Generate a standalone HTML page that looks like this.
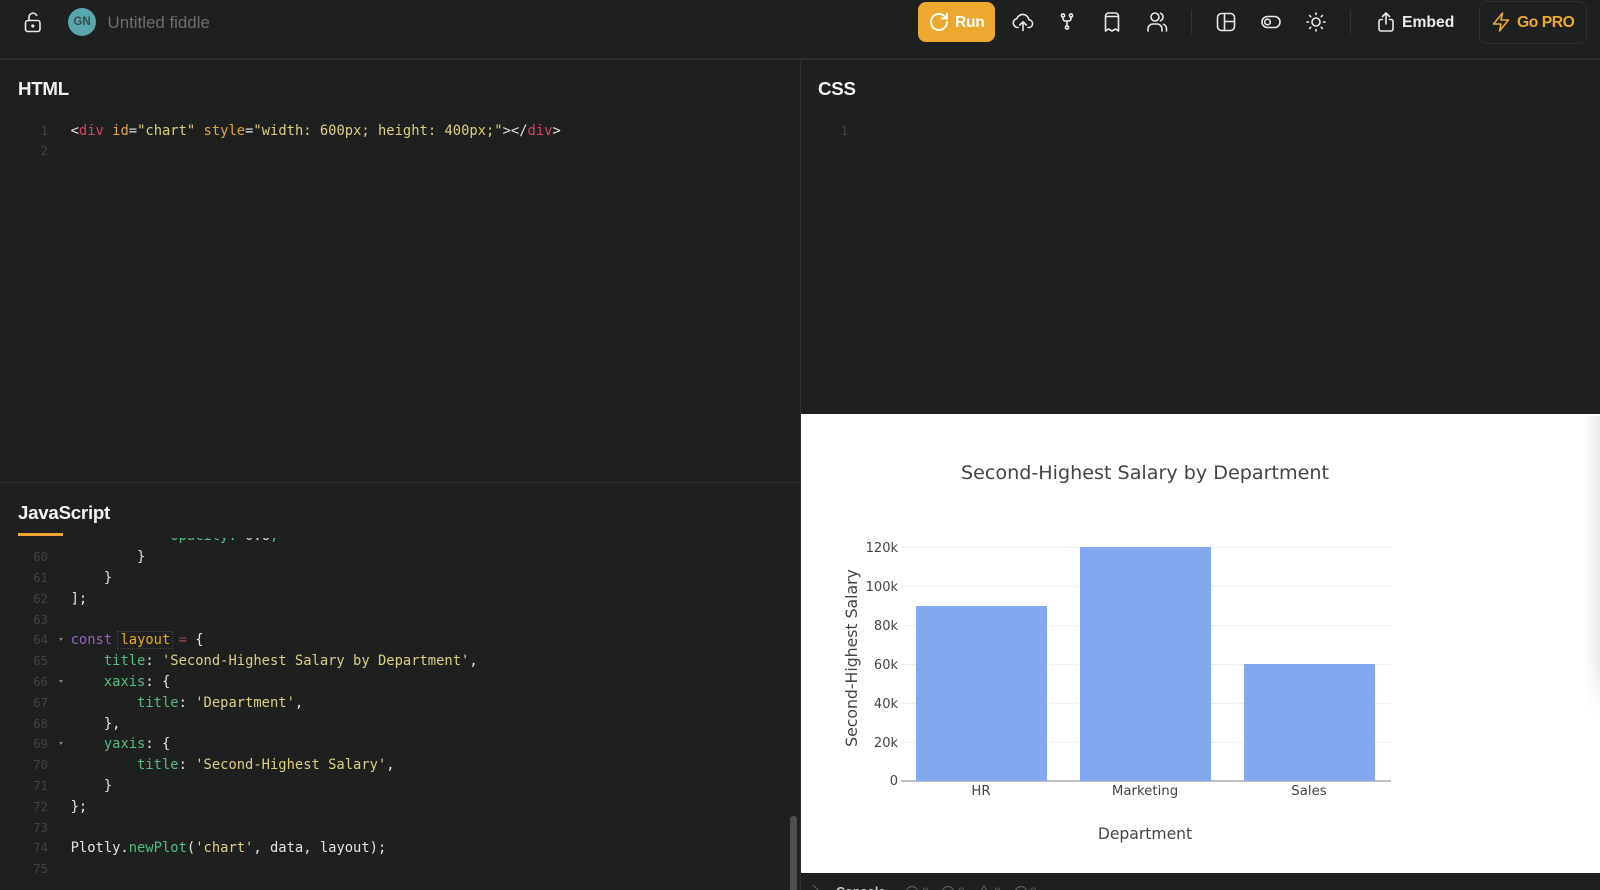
<!DOCTYPE html>
<html><head><meta charset="utf-8"><style>
html,body{margin:0;padding:0;background:#1e2020;width:1600px;height:890px;overflow:hidden}
#r{position:relative;width:1600px;height:890px;overflow:hidden;font-family:"Liberation Sans",sans-serif;color:#e8e8e8;filter:blur(.3px)}
.a{position:absolute}
.h{position:absolute;font:bold 18.7px/24px "Liberation Sans",sans-serif;color:#f2f2f2;letter-spacing:-.25px}
.code{position:absolute;left:0;overflow:hidden;font:13.8px/20.8px "DejaVu Sans Mono",monospace;white-space:pre;color:#e4e4e4}
.l{position:absolute;left:70.6px;height:20.8px}
.n{position:absolute;left:20px;width:28px;text-align:right;color:#414342;font-size:12.4px;height:20.8px}
.f{position:absolute;left:58.5px;width:0;height:0;border-left:2.5px solid transparent;border-right:2.5px solid transparent;border-top:3.5px solid #808080}
.t{color:#d8425f}.o{color:#e3a236}.s{color:#dccf7d}.g{color:#52bd7f}.p{color:#9a5fc0}.e{color:#a84b4b}
svg.i{position:absolute;fill:none;stroke:#e8e8e8;stroke-width:1.6;stroke-linecap:round;stroke-linejoin:round}
.d{position:absolute;top:10px;width:1px;height:24px;background:#333534}
.b{position:absolute;top:12px;font:bold 15.7px/21px 'Liberation Sans',sans-serif}
</style></head><body><div id="r">
<div class="a" style="left:0;top:58px;width:1600px;height:2px;background:#2d2f2e"></div>
<div class="a" style="left:800px;top:60px;width:1px;height:830px;background:#2d2f2e"></div>
<div class="a" style="left:0;top:482px;width:801px;height:1px;background:#2d2f2e"></div>

<svg class="i" style="left:22px;top:11px" width="22" height="22" viewBox="0 0 22 22"><rect x="3.5" y="9.5" width="14.5" height="11" rx="2.5"/><path d="M7 9.500V6a4 4 0 0 1 7.600-1.600"/><circle cx="10.800" cy="15" r=".8" fill="#e8e8e8"/></svg>
<div class="a" style="left:68px;top:8px;width:28px;height:28px;border-radius:50%;background:#58a7ad;color:#3a4a48;font:bold 11.5px/29px 'Liberation Sans',sans-serif;text-align:center">GN</div>
<div class="a" style="left:107.500px;top:12px;font-size:16.900px;line-height:21px;color:#6c6e6d">Untitled fiddle</div>

<div class="a" style="left:918px;top:2px;width:77px;height:40px;border-radius:8px;background:#eda92f"></div>
<svg class="i" style="left:928px;top:11px;stroke:#fff;stroke-width:1.900" width="22" height="22" viewBox="0 0 22 22"><path d="M19 11a8 8 0 1 1-2.600-5.900L19 7.500"/><path d="M19 2.500v5h-5"/></svg>
<div class="b" style="left:955px;color:#fff;letter-spacing:-.3px">Run</div>

<svg class="i" style="left:1012px;top:11px" width="22" height="22" viewBox="0 0 22 22"><path d="M6 16.500H5.500a4.500 4.500 0 0 1-.6-8.900 6.200 6.200 0 0 1 12 1.200 3.900 3.900 0 0 1 .6 7.700H16"/><path d="M11 19.500V11M7.800 14 11 10.800l3.200 3.200"/></svg>
<svg class="i" style="left:1056px;top:11px" width="22" height="22" viewBox="0 0 22 22"><circle cx="7" cy="4.500" r="1.600"/><circle cx="15" cy="4.500" r="1.600"/><circle cx="11" cy="16.500" r="1.600"/><path d="M7 6.100v1.400a2.500 2.500 0 0 0 2.500 2.500h3a2.500 2.500 0 0 0 2.500-2.500V6.100M11 10v4.900"/></svg>
<svg class="i" style="left:1101px;top:11px" width="22" height="22" viewBox="0 0 22 22"><path d="M4.500 5a3 3 0 0 1 3-3h7a3 3 0 0 1 3 3v15l-3-2-3.500 2-3.500-2-3 2zM4.500 5.500h13"/></svg>
<svg class="i" style="left:1146px;top:11px" width="22" height="22" viewBox="0 0 22 22"><circle cx="9" cy="6" r="4"/><path d="M2 20v-2a5 5 0 0 1 5-5h4a5 5 0 0 1 5 5v2M14.500 2.300a4 4 0 0 1 0 7.400M17.500 13.300a5 5 0 0 1 3 4.700v2"/></svg>
<div class="d" style="left:1191px"></div>
<svg class="i" style="left:1215px;top:11px" width="22" height="22" viewBox="0 0 22 22"><rect x="2.500" y="2.500" width="17" height="17" rx="4"/><path d="M9.500 2.500v17M9.500 10.500h10"/></svg>
<svg class="i" style="left:1260px;top:11px" width="22" height="22" viewBox="0 0 22 22"><rect x="2" y="5.500" width="18" height="11" rx="5.500"/><circle cx="7.500" cy="11" r="2.800"/></svg>
<svg class="i" style="left:1305px;top:11px" width="22" height="22" viewBox="0 0 22 22"><circle cx="11" cy="11" r="4"/><path d="M11 2v1.500M11 18.500V20M4.600 4.600l1.100 1.100M16.300 16.300l1.100 1.100M2 11h1.500M18.500 11H20M4.600 17.400l1.100-1.100M16.300 5.700l1.100-1.100"/></svg>
<div class="d" style="left:1350px"></div>
<svg class="i" style="left:1375px;top:11px" width="22" height="22" viewBox="0 0 22 22"><path d="M7.500 8.500H6a2 2 0 0 0-2 2V18a2 2 0 0 0 2 2h10a2 2 0 0 0 2-2v-7.500a2 2 0 0 0-2-2h-1.500M11 13V2M7.500 5.500 11 2l3.500 3.500"/></svg>
<div class="b" style="left:1402px;color:#ececec">Embed</div>
<div class="a" style="left:1479px;top:1px;width:106px;height:41px;border:1px solid #2f3130;border-radius:8px"></div>
<svg class="i" style="left:1490px;top:11px;stroke:#eda92f" width="22" height="22" viewBox="0 0 22 22"><path d="M12.500 2 3.500 13H11l-1.500 7 9-11H11z"/></svg>
<div class="b" style="left:1517px;color:#eda92f;letter-spacing:-.45px">Go PRO</div>

<div class="h" style="left:18px;top:76.500px">HTML</div>
<div class="h" style="left:818px;top:76.500px">CSS</div>
<div class="h" style="left:18px;top:500.500px">JavaScript</div>
<div class="a" style="left:18px;top:533px;width:45px;height:3px;background:#eda92f"></div>

<div class="code" style="top:0;width:800px;height:480px">
<div class="n" style="top:120.600px">1</div><div class="l" style="top:120.600px">&lt;<span class="t">div</span> <span class="o">id</span>=<span class="s">"chart"</span> <span class="o">style</span>=<span class="s">"width: 600px; height: 400px;"</span>&gt;&lt;/<span class="t">div</span>&gt;</div>
<div class="n" style="top:141px">2</div>
</div>
<div class="code" style="top:0;left:800px;width:100px;height:200px"><div class="n" style="top:120.500px">1</div></div>

<div class="code" style="top:538px;width:785px;height:352px">
<div class="l" style="top:-11.600px;color:#52bd7f">            <span class="g">opacity</span>: <span style="color:#dedede">0.6</span>,</div>
<div class="n" style="top:9.200px">60</div><div class="l" style="top:9.200px">        }</div>
<div class="n" style="top:30px">61</div><div class="l" style="top:30px">    }</div>
<div class="n" style="top:50.800px">62</div><div class="l" style="top:50.800px">];</div>
<div class="n" style="top:71.600px">63</div>
<div class="n" style="top:92.400px">64</div><div class="f" style="top:100px"></div><div class="l" style="top:92.400px"><span class="p">const</span> <span style="color:#eaa90f;outline:1px dotted #45453c;padding:0 2px;margin:0 -2px">layout</span> <span class="e">=</span> {</div>
<div class="n" style="top:113.200px">65</div><div class="l" style="top:113.200px">    <span class="g">title</span>: <span class="s">'Second-Highest Salary by Department'</span>,</div>
<div class="n" style="top:134px">66</div><div class="f" style="top:142px"></div><div class="l" style="top:134px">    <span class="g">xaxis</span>: {</div>
<div class="n" style="top:154.800px">67</div><div class="l" style="top:154.800px">        <span class="g">title</span>: <span class="s">'Department'</span>,</div>
<div class="n" style="top:175.600px">68</div><div class="l" style="top:175.600px">    },</div>
<div class="n" style="top:196.400px">69</div><div class="f" style="top:204px"></div><div class="l" style="top:196.400px">    <span class="g">yaxis</span>: {</div>
<div class="n" style="top:217.200px">70</div><div class="l" style="top:217.200px">        <span class="g">title</span>: <span class="s">'Second-Highest Salary'</span>,</div>
<div class="n" style="top:238px">71</div><div class="l" style="top:238px">    }</div>
<div class="n" style="top:258.800px">72</div><div class="l" style="top:258.800px">};</div>
<div class="n" style="top:279.600px">73</div>
<div class="n" style="top:300.400px">74</div><div class="l" style="top:300.400px">Plotly.<span class="g">newPlot</span>(<span class="s">'chart'</span>, data, layout);</div>
<div class="n" style="top:321.200px">75</div>
</div>
<div class="a" style="left:790px;top:816px;width:7px;height:74px;border-radius:3px 3px 0 0;background:#4c4e4a"></div>

<div class="a" style="left:801px;top:414px;width:799px;height:459px;background:#fff"></div>
<div class="a" style="left:1584px;top:416px;width:16px;height:300px;background:linear-gradient(90deg,#fff,#f1f1f2 70%,#e8e8ea);-webkit-mask-image:linear-gradient(180deg,#000 80%,transparent)"></div>
<svg class="a" style="left:801px;top:414px" width="799" height="459" viewBox="801 414 799 459" font-family="'DejaVu Sans',sans-serif" fill="#444">
<g stroke="#eeeeee" stroke-width="1"><path d="M901 547.500H1391M901 586.500H1391M901 625.500H1391M901 664.500H1391M901 703.500H1391M901 742.500H1391"/></g>
<path d="M901 781H1391" stroke="#9a9a9a" stroke-width="1.200"/>
<g fill="#83a8ef"><rect x="916" y="606" width="131" height="175"/><rect x="1080" y="547" width="131" height="234"/><rect x="1244" y="664" width="131" height="117"/></g>
<text x="1145" y="479" text-anchor="middle" font-size="19" textLength="368" lengthAdjust="spacingAndGlyphs">Second-Highest Salary by Department</text>
<g font-size="13" text-anchor="end"><text x="898" y="552">120k</text><text x="898" y="591">100k</text><text x="898" y="630">80k</text><text x="898" y="669">60k</text><text x="898" y="708">40k</text><text x="898" y="747">20k</text><text x="898" y="785">0</text></g>
<g font-size="13.300" text-anchor="middle"><text x="981" y="795">HR</text><text x="1145" y="795">Marketing</text><text x="1309" y="795">Sales</text></g>
<text x="1145" y="839" text-anchor="middle" font-size="15.600">Department</text>
<text transform="translate(857 658) rotate(-90)" text-anchor="middle" font-size="15.700">Second-Highest Salary</text>
</svg>

<div class="a" style="left:836px;top:884px;font:bold 12.500px/16px 'Liberation Sans',sans-serif;color:#c8c8c8">Console</div>
<svg class="a" style="left:810px;top:880px" width="300" height="14" fill="none" stroke="#5a5c5b" stroke-width="1.200"><path d="M3 5l5 5-5 5"/><circle cx="102" cy="12" r="5.500"/><circle cx="138" cy="12" r="5.500"/><path d="M174 6l6 10h-12z"/><circle cx="211" cy="12" r="5.500"/></svg>
<div class="a" style="left:922px;top:884px;font-size:12px;line-height:16px;color:#5a5c5b">0</div>
<div class="a" style="left:958px;top:884px;font-size:12px;line-height:16px;color:#5a5c5b">0</div>
<div class="a" style="left:994px;top:884px;font-size:12px;line-height:16px;color:#5a5c5b">0</div>
<div class="a" style="left:1030px;top:884px;font-size:12px;line-height:16px;color:#5a5c5b">0</div>
</div></body></html>
